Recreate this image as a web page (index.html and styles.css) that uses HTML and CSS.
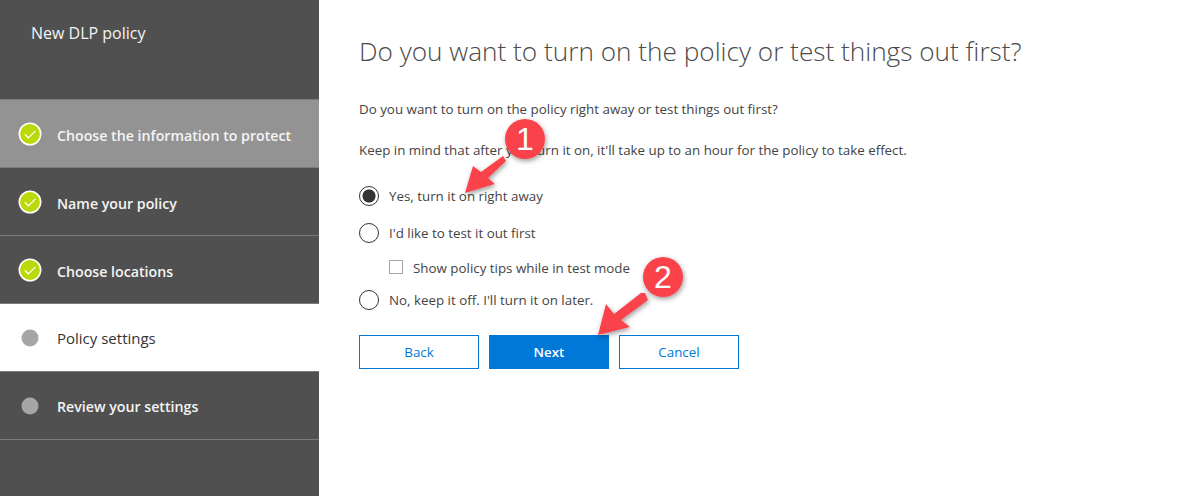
FILE: index.html
```html
<!DOCTYPE html>
<html lang="en">
<head>
<meta charset="utf-8">
<title>New DLP policy</title>
<link rel="stylesheet" href="styles.css">
</head>
<body>
<div class="app">
  <aside class="sidebar">
    <div class="side-title">New DLP policy</div>
    <ul class="steps">
      <li class="step step-hover"><svg class="step-icon" viewBox="0 0 24 24"><circle cx="12" cy="12" r="10.7" fill="#bad80a" stroke="#fff" stroke-width="1.6"/><path d="M6.8 12.3l3.6 3.5 7-7" fill="none" stroke="#fff" stroke-width="1.2"/></svg><span>Choose the information to protect</span></li>
      <li class="step"><svg class="step-icon" viewBox="0 0 24 24"><circle cx="12" cy="12" r="10.7" fill="#bad80a" stroke="#fff" stroke-width="1.6"/><path d="M6.8 12.3l3.6 3.5 7-7" fill="none" stroke="#fff" stroke-width="1.2"/></svg><span>Name your policy</span></li>
      <li class="step"><svg class="step-icon" viewBox="0 0 24 24"><circle cx="12" cy="12" r="10.7" fill="#bad80a" stroke="#fff" stroke-width="1.6"/><path d="M6.8 12.3l3.6 3.5 7-7" fill="none" stroke="#fff" stroke-width="1.2"/></svg><span>Choose locations</span></li>
      <li class="step step-current"><svg class="step-icon" viewBox="0 0 24 24"><circle cx="12" cy="12" r="8.5" fill="#a6a6a6"/></svg><span>Policy settings</span></li>
      <li class="step step-last"><svg class="step-icon" viewBox="0 0 24 24"><circle cx="12" cy="12" r="8.5" fill="#a6a6a6"/></svg><span>Review your settings</span></li>
    </ul>
  </aside>
  <main class="content">
    <h1 class="heading">Do you want to turn on the policy or test things out first?</h1>
    <p class="para para-first">Do you want to turn on the policy right away or test things out first?</p>
    <p class="para para-second">Keep in mind that after you turn it on, it'll take up to an hour for the policy to take effect.</p>
    <div class="options">
      <div class="option"><span class="radio radio-on"></span><span>Yes, turn it on right away</span></div>
      <div class="option"><span class="radio"></span><span>I'd like to test it out first</span></div>
      <div class="check-row"><span class="checkbox"></span><span>Show policy tips while in test mode</span></div>
      <div class="option"><span class="radio"></span><span>No, keep it off. I'll turn it on later.</span></div>
    </div>
    <div class="buttons">
      <button class="btn">Back</button>
      <button class="btn btn-primary">Next</button>
      <button class="btn">Cancel</button>
    </div>
  </main>
  <svg class="callouts" width="1181" height="496" viewBox="0 0 1181 496">
    <defs>
      <filter id="sh" x="-30%" y="-30%" width="160%" height="160%"><feDropShadow dx="1" dy="2" stdDeviation="2.5" flood-color="#000" flood-opacity=".4"/></filter>
    </defs>
    <g filter="url(#sh)">
      <path d="M503 156L481 172L473 166L465 193L495 184L488 178L506 161Z" fill="#f9434a"/>
      <circle cx="525" cy="139" r="20" fill="#f9434a"/>
    </g>
    <g filter="url(#sh)">
      <path d="M645 293L641 293L614 314L606 304L598 335L630 327L621 320L648 300Z" fill="#f9434a"/>
      <circle cx="663" cy="277" r="20" fill="#f9434a"/>
    </g>
    <text class="callout-num" x="525" y="150">1</text>
    <text class="callout-num" x="663" y="288">2</text>
  </svg>
</div>
</body>
</html>
```
FILE: styles.css
```css
* { box-sizing: border-box; }
html, body { margin: 0; padding: 0; }
body {
  width: 1181px;
  height: 496px;
  overflow: hidden;
  background: #fff;
  font-family: "Open Sans", "Noto Sans", "Liberation Sans", sans-serif;
  color: #333;
}
.app { position: relative; display: flex; width: 1181px; height: 496px; }
.sidebar { width: 319px; flex: none; background: #505050; color: #fff; }
.side-title { height: 99px; padding: 21px 0 0 31px; font-size: 16px; line-height: 24px; color: #f4f4f4; }
.steps { list-style: none; margin: 0; padding: 0; border-top: 1px solid #7a7a7a; }
.step {
  display: flex;
  align-items: center;
  height: 68px;
  padding-left: 18px;
  border-bottom: 1px solid #7a7a7a;
  font-size: 14.2px;
  font-weight: 600;
  color: #f4f4f4;
}
.step span { margin: 4px 0 0 15px; }
.step-icon { width: 24px; height: 24px; flex: none; }
.step-hover { background: #939393; }
.step-current { background: #fff; color: #333; font-weight: 400; font-size: 15px; }
.step-current span { margin-top: 1px; }
.step-last span { margin-top: 2px; }
.content { flex: 1; padding: 35px 0 0 40px; }
.heading { margin: 0; font-size: 26.2px; font-weight: 300; line-height: 33px; color: #4a4a4a; white-space: nowrap; }
.para { margin: 0; font-size: 13.35px; line-height: 20px; color: #444; }
.para-first { margin-top: 31px; }
.para-second { margin-top: 21px; }
.options { margin-top: 25px; font-size: 13.35px; color: #444; }
.option { display: flex; align-items: center; height: 22px; }
.option + .option { margin-top: 15px; }
.check-row { display: flex; align-items: center; height: 20px; margin: 14px 0 11px 30px; }
.check-row + .option { margin-top: 0; }
.radio { width: 20px; height: 20px; flex: none; margin-right: 10px; border: 1.5px solid #333; border-radius: 50%; background: #fff; }
.radio-on { background: radial-gradient(circle, #333 0, #333 6.2px, #fff 6.9px); }
.checkbox { width: 14px; height: 14px; flex: none; margin: 0 10px 2px 0; border: 1px solid #a6a6a6; background: #fff; }
.buttons { display: flex; gap: 10px; margin-top: 24px; }
.btn { width: 120px; height: 34px; padding: 0; border: 1px solid #0078d7; background: #fff; color: #0078d7; font: inherit; font-size: 13.35px; }
.btn-primary { background: #0078d7; color: #fff; font-weight: 600; }
.callouts { position: absolute; left: 0; top: 0; pointer-events: none; }
.callout-num { font-family: "Liberation Sans", Arial, sans-serif; font-size: 32px; fill: #fff; text-anchor: middle; }
```
